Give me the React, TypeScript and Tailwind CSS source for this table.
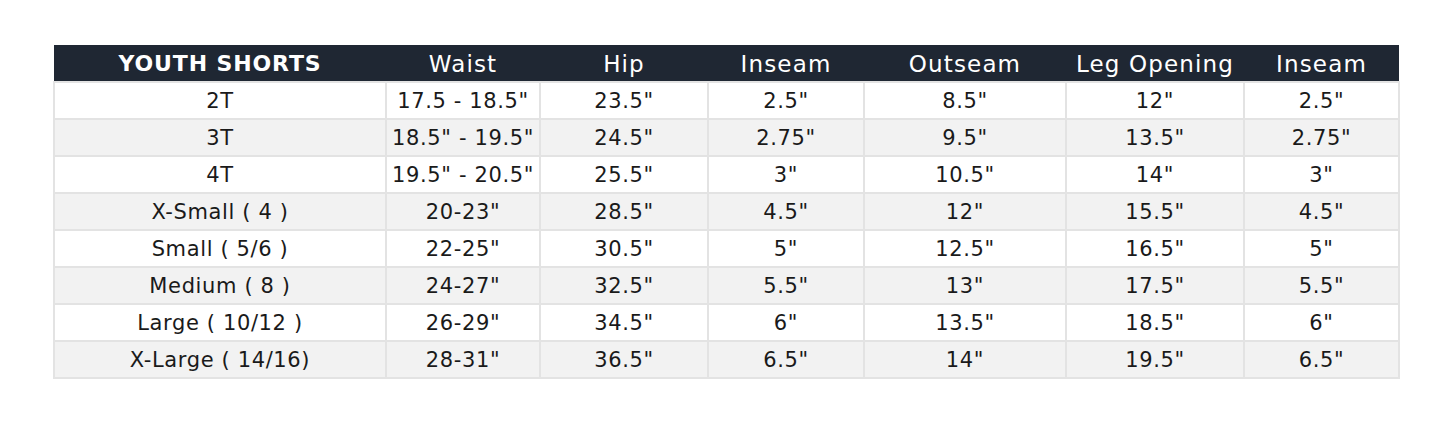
const headers = ["YOUTH SHORTS", "Waist", "Hip", "Inseam", "Outseam", "Leg Opening", "Inseam"];

const widths = [332, 154, 168, 156, 202, 178, 155];

const rows: string[][] = [
  ["2T", '17.5 - 18.5"', '23.5"', '2.5"', '8.5"', '12"', '2.5"'],
  ["3T", '18.5" - 19.5"', '24.5"', '2.75"', '9.5"', '13.5"', '2.75"'],
  ["4T", '19.5" - 20.5"', '25.5"', '3"', '10.5"', '14"', '3"'],
  ["X-Small ( 4 )", '20-23"', '28.5"', '4.5"', '12"', '15.5"', '4.5"'],
  ["Small ( 5/6 )", '22-25"', '30.5"', '5"', '12.5"', '16.5"', '5"'],
  ["Medium ( 8 )", '24-27"', '32.5"', '5.5"', '13"', '17.5"', '5.5"'],
  ["Large ( 10/12 )", '26-29"', '34.5"', '6"', '13.5"', '18.5"', '6"'],
  ["X-Large ( 14/16)", '28-31"', '36.5"', '6.5"', '14"', '19.5"', '6.5"'],
];

export default function App() {
  return (
    <div
      className="h-[437px] w-[1445px] bg-white pl-[53px] pt-[45px]"
      style={{ fontFamily: '"DejaVu Sans", "Noto Sans", sans-serif' }}
    >
      <table className="table-fixed border-collapse text-center text-[#1a1a1a]">
        <colgroup>
          {widths.map((w, i) => (
            <col key={i} style={{ width: w }} />
          ))}
        </colgroup>
        <thead>
          <tr className="h-[37px] bg-[#1f2733] text-white">
            {headers.map((h, i) => (
              <th
                key={i}
                className={
                  i === 0
                    ? "p-0 pt-[2px] text-[22px] leading-none font-bold tracking-[0.04em]"
                    : "p-0 pt-[2px] text-[23px] leading-none font-normal tracking-[0.05em]"
                }
              >
                {h}
              </th>
            ))}
          </tr>
        </thead>
        <tbody>
          {rows.map((r, ri) => (
            <tr
              key={ri}
              className={ri % 2 === 0 ? "h-[37px] bg-white" : "h-[37px] bg-[#f2f2f2]"}
            >
              {r.map((c, ci) => (
                <td
                  key={ci}
                  className="border-2 border-[#e3e3e3] p-0 pt-[2px] text-[21px] leading-none tracking-[0.03em]"
                >
                  {c}
                </td>
              ))}
            </tr>
          ))}
        </tbody>
      </table>
    </div>
  );
}
